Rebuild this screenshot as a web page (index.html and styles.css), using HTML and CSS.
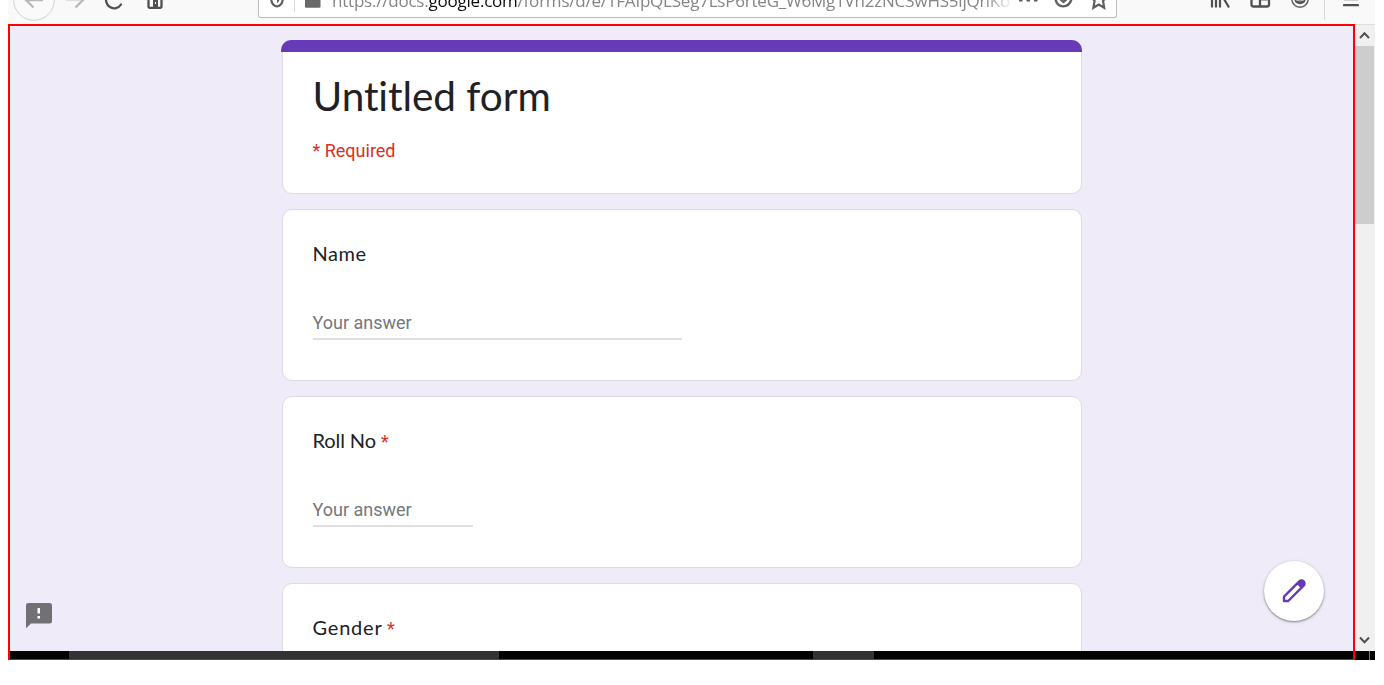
FILE: index.html
```
<!DOCTYPE html>
<html lang="en">
<head>
<meta charset="utf-8">
<title>Untitled form</title>
<link rel="stylesheet" href="styles.css">
</head>
<body>
<div class="window">
  <header class="toolbar">
    <nav class="nav">
      <svg class="back" width="44" height="24" viewBox="12 0 44 24" fill="none"><circle cx="34" cy="0" r="20.3" fill="#fafafa" stroke="#d2d2d4"/><path d="M43 0H25M33.500 7.500L25 -1" stroke="#b8b8b9" stroke-width="2.300"/></svg>
      <svg class="forward" width="24" height="24" viewBox="64 0 24 24" fill="none" stroke="#b8b8b9" stroke-width="2.300"><path d="M66 0H84" stroke-opacity=".4"/><path d="M75.500 7.500L84 -1"/></svg>
      <svg class="reload" width="22" height="24" viewBox="104 0 22 24" fill="none" stroke="#505051" stroke-width="2.300" stroke-linecap="round"><path d="M107.300 -4A7.800 7.800 0 0 0 121 4.500"/></svg>
      <svg class="home" width="22" height="24" viewBox="144 0 22 24"><path d="M148.500 -2V6.500Q148.500 7.800 150 7.800H160Q161.500 7.800 161.500 6.500V-2" fill="none" stroke="#505051" stroke-width="2.300"/><path d="M153 0H158V7H153Z" fill="#505051"/><path d="M155.500 2V4" stroke="#f9f9fa" stroke-width="1"/><path d="M146.500 0H148" stroke="#aaa"/><path d="M162 0H163.500" stroke="#aaa"/></svg>
    </nav>
    <div class="urlbar">
      <svg class="shield" width="20" height="17" viewBox="267 0 20 17"><path d="M271.100 -3C271 2 272.500 5.700 277 6.500C281.500 5.700 283 2 282.900 -3" fill="none" stroke="#5f5f60" stroke-width="2.200"/><path d="M277 -2V3.200C279 2 279.500 0 279.500 -2Z" fill="#5f5f60"/></svg>
      <span class="rule"></span>
      <svg class="lock" width="16" height="17" viewBox="0 0 16 17"><path d="M0 0H15.500V6.500Q15.500 7.800 14 7.800H1.500Q0 7.800 0 6.500Z" fill="#686869"/></svg>
      <div class="url"><span class="scheme">https://docs.</span><b class="domain">google.com</b><span class="path">/forms/d/e/1FAIpQLSeg7LsP6rteG_W6Mg1Vh2zNC3wHS5ljQnKo</span></div>
      <svg class="actions" width="92" height="17" viewBox="1017 0 92 17"><path d="M1020 0H1023.500M1027.500 0H1031M1035 0H1038.500" stroke="#5f5f60" stroke-width="3"/><path d="M1056.500 -1C1058 8.800 1070 8.800 1072.500 -1" fill="none" stroke="#5f5f60" stroke-width="2.400"/><path d="M1060 -2L1064.500 2L1069 -2" fill="none" stroke="#5f5f60" stroke-width="2.200"/><path d="M1093 -2L1095.600 .800L1094.400 7.800L1099.800 4.500L1105.200 7.800L1104 .800L1106.800 -2" fill="none" stroke="#5f5f60" stroke-width="2.200"/></svg>
    </div>
    <div class="tools">
      <svg width="22" height="24" viewBox="1210 0 22 24" stroke="#505051" stroke-width="2.200"><path d="M1212 -2V7.500M1216 -2V7.500M1220 -2V7.500M1224 -1L1229 7.500"/></svg>
      <svg width="22" height="24" viewBox="1250 0 22 24" fill="none" stroke="#505051" stroke-width="2.300"><path d="M1251.500 -2V4.500Q1251.500 6.500 1253.500 6.500H1267Q1269 6.500 1269 4.500V-2M1260 -1V6"/><path d="M1261 .500H1268" stroke="#aaa" stroke-width="1"/></svg>
      <svg width="20" height="24" viewBox="1290 0 20 24"><circle cx="1300" cy="-1" r="8.200" fill="none" stroke="#606061" stroke-width="1.500"/><path d="M1294.500 0H1305.500C1305 5.500 1295 5.500 1294.500 0Z" fill="#505051"/><path d="M1296 0Q1300 2 1304 0" fill="none" stroke="#c8c8c8" stroke-width="1"/></svg>
      <span class="split"></span>
      <svg width="16" height="24" viewBox="1343 0 16 24"><path d="M1344 .500H1358" stroke="#d0d0d0"/><path d="M1344 5.200H1358" stroke="#505051" stroke-width="2.300" stroke-linecap="round"/></svg>
    </div>
  </header>
  <div class="content">
    <main class="page">
      <section class="card intro">
        <h1>Untitled form</h1>
        <p class="required">* Required</p>
      </section>
      <section class="card">
        <h2 class="name">Name</h2>
        <div class="answer">Your answer</div>
      </section>
      <section class="card">
        <h2 class="roll">Roll No <i>*</i></h2>
        <div class="answer short">Your answer</div>
      </section>
      <section class="card">
        <h2 class="gender">Gender <i>*</i></h2>
      </section>
      <svg class="report" width="26" height="26" viewBox="0 0 26 26"><path d="M2.500 0H23.500Q26 0 26 2.500V18Q26 20.500 23.500 20.500H5L0 25.300V2.500Q0 0 2.500 0Z" fill="#717075"/><path d="M11.500 5H14V10.500H11.500ZM11.500 13H14V15.500H11.500Z" fill="#fff"/></svg>
      <div class="edit"><svg width="24" height="24" viewBox="0 0 24 24"><path d="M2 22V17.700L17.300 2.300A2.900 2.900 0 0 1 21.600 6.700L6.200 22Z" fill="none" stroke="#673ab7" stroke-width="2.400" stroke-linejoin="round"/><path d="M14.700 4.900L17.300 2.300A2.900 2.900 0 0 1 21.600 6.700L19.100 9.200Z" fill="#673ab7"/></svg></div>
    </main>
    <aside class="scroll">
      <svg width="20" height="21" viewBox="0 0 20 21"><path d="M5 13L9.500 8.300L14 13" fill="none" stroke="#505050" stroke-width="2"/></svg>
      <div class="thumb"></div>
      <svg class="down" width="20" height="21" viewBox="0 0 20 21"><path d="M5 7.500L9.500 12.200L14 7.500" fill="none" stroke="#505050" stroke-width="2"/></svg>
    </aside>
  </div>
  <footer class="taskbar"><span class="search"></span><span class="task"></span><span class="peek"></span></footer>
</div>
</body>
</html>
```

FILE: styles.css
```
* { box-sizing: border-box; }
body { margin: 0; height: 685px; overflow: hidden; background: #fff; font-family: Roboto, sans-serif; }
svg { display: block; flex: none; }
.window { width: 1367px; height: 660px; margin-left: 8px; overflow: hidden; }
.toolbar { display: flex; height: 24px; overflow: hidden; background: #f9f9fa; }
.nav { display: flex; width: 250px; padding-left: 4px; }
.forward { margin-left: 8px; }
.reload { margin-left: 16px; }
.home { margin-left: 18px; }
.urlbar { display: flex; width: 859px; height: 18px; padding-left: 8px; background: #fff; border: 1px solid #bcbcbd; border-top: 0; border-radius: 0 0 3px 3px; }
.rule { width: 1px; height: 12px; margin-left: 7px; background: #d8d8d8; }
.lock { margin-left: 10px; }
.url { width: 678px; height: 17px; margin-left: 11px; overflow: hidden; white-space: nowrap; color: #858586; font: 17px/24px "Open Sans", sans-serif; letter-spacing: -.22px; -webkit-mask-image: linear-gradient(90deg, #000 652px, transparent 682px); mask-image: linear-gradient(90deg, #000 652px, transparent 682px); }
.url span, .url b { display: inline-block; margin-top: -11px; font-weight: 400; vertical-align: top; }
.url .domain { color: #0c0c0d; }
.url .path { letter-spacing: -.22px; }
.actions { margin-left: 6px; }
.tools { display: flex; margin-left: 93px; }
.tools svg + svg { margin-left: 18px; }
.split { width: 1px; height: 20px; margin: 0 18px 0 14px; background: #d7d7db; }
.content { display: flex; height: 627px; }
.page { position: relative; display: flex; flex-direction: column; align-items: center; gap: 15px; width: 1347px; padding-top: 14px; overflow: hidden; background: #efebf8; border: 2px solid #f00; border-bottom: 0; }
.card { flex: none; width: 800px; height: 172px; padding: 29px 30px 0; background: #fff; border: 1px solid #dadce0; border-radius: 10px; }
.intro { position: relative; height: 154px; padding-top: 30px; }
.intro::before { content: ""; position: absolute; top: -1px; left: -2px; right: -1px; height: 12px; background: #673ab7; border-radius: 10px 10px 0 0; }
h1 { margin: 0; color: #202124; font: 400 40.500px/50px Lato, sans-serif; letter-spacing: -.05px; }
.required { margin: 18px 0 0; color: #d93025; font-size: 18px; line-height: 24px; }
h2 { height: 28px; margin: 0; color: #202124; font: 400 20px/28px Lato, sans-serif; }
h2 i { color: #d93025; font-family: Roboto, sans-serif; font-size: 18px; font-style: normal; line-height: 0; letter-spacing: 0; }
.name { letter-spacing: .55px; }
.roll { letter-spacing: -.1px; }
.gender { letter-spacing: .8px; word-spacing: -1px; }
.answer { width: 369px; height: 33px; margin-top: 40px; border-bottom: 2px solid #e0e0e0; color: #74777b; font-size: 18px; line-height: 32px; }
.short { width: 160px; }
.report { position: absolute; left: 16px; bottom: 22px; }
.edit { position: absolute; right: 29px; bottom: 30px; display: flex; align-items: center; justify-content: center; width: 60px; height: 60px; background: #fff; border-radius: 50%; box-shadow: 0 1px 2px rgba(0, 0, 0, .4), 0 1px 4px rgba(0, 0, 0, .12); }
.scroll { display: flex; flex-direction: column; width: 20px; height: 627px; background: #f0f0f0; border-top: 1px solid #dedede; }
.thumb { width: 19px; height: 178px; background: #cdcdcd; }
.down { margin-top: auto; }
.taskbar { display: flex; height: 9px; background: linear-gradient(#f00, #f00) 0 0 / 2px 9px no-repeat, linear-gradient(#f00, #f00) 0 8px / 1347px 1px no-repeat, linear-gradient(#f00, #f00) 1345px 0 / 2px 9px no-repeat, #000; }
.taskbar span { height: 8px; background: #333; }
.search { width: 430px; margin-left: 61px; }
.task { width: 61px; margin-left: 314px; }
.taskbar .peek { width: 1px; height: 9px; margin-left: 495px; background: #777; }
```
